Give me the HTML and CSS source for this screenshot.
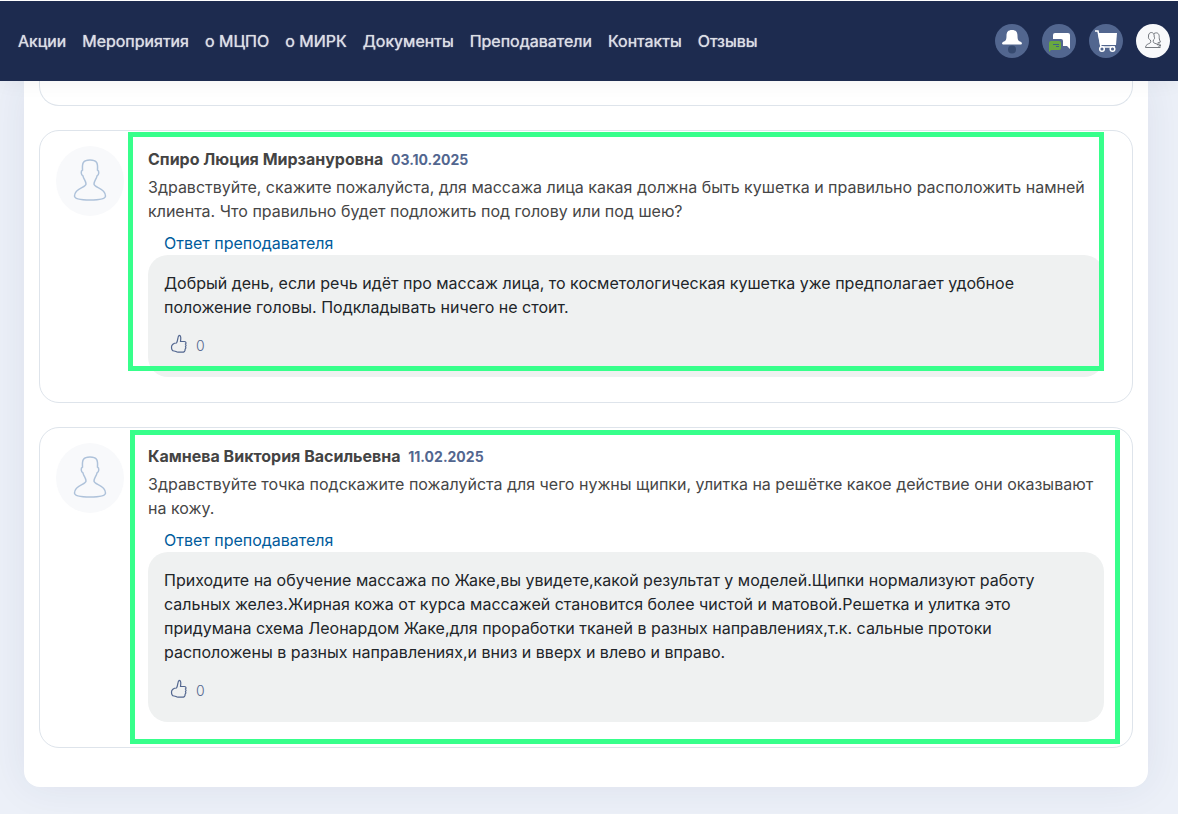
FILE: index.html
```html
<!DOCTYPE html>
<html lang="ru">
<head>
    <meta charset="UTF-8">
    <meta name="viewport" content="width=device-width, initial-scale=1.0">
    <title>Отзывы</title>
    <link rel="stylesheet" href="styles.css">
</head>
<body>
    <svg class="sprite" aria-hidden="true">
        <symbol id="icon-user" viewBox="0 0 34 42">
            <path d="M9.500 11C9 4 10 1 17 1s8 3 7.500 10c2 1 1.500 5-.5 6-.5 3-3 5-3 8 0 4 11.500 3.500 11.500 12 0 3-6 4-15.500 4S1.500 40 1.500 37c0-8.500 11.500-8 11.500-12 0-3-2.500-5-3-8-2-1-2.500-5-.5-6z"/>
        </symbol>
        <symbol id="icon-like" viewBox="0 0 18 20">
            <path d="M6.500 9C8 7 7.500 2 9.200 1.300c1.800 0 1.800 3 1.300 6.200h4c2 0 1.600 2 1 2.500 1 1 .5 2 0 2.600.7 1 .3 2-.4 2.600.3 2-1 3-3 3H8c-2 0-2-1.200-4-1.200-2 0-2.500-2-2.500-4S3.500 9 6.500 9z"/>
        </symbol>
    </svg>

    <header class="header">
        <nav class="nav">
            <a href="#">Акции</a>
            <a href="#">Мероприятия</a>
            <a href="#">о МЦПО</a>
            <a href="#">о МИРК</a>
            <a href="#">Документы</a>
            <a href="#">Преподаватели</a>
            <a href="#">Контакты</a>
            <a href="#">Отзывы</a>
        </nav>
        <div class="actions">
            <button class="action-btn" type="button" aria-label="Уведомления">
                <svg viewBox="0 0 34 34">
                    <circle cx="17" cy="25.500" r="4" fill="#364a70"/>
                    <path d="M17 6c4 0 5.500 2 5.500 6 0 4 1 5 3.500 6 1 .5 1.500 2.500 0 2.500H8c-1.500 0-1-2-0-2.500C10.500 17 11.500 16 11.500 12c0-4 1.500-6 5.500-6z" fill="#fff"/>
                </svg>
            </button>
            <button class="action-btn" type="button" aria-label="Сообщения">
                <svg viewBox="0 0 34 34">
                    <path d="M13 9h13q2 0 2 2v14l-3-3h-4v-5q0-2-2-2h-8v-4q0-2 2-2z" fill="#fff"/>
                    <path d="M9 17h8q2 0 2 2v5q0 2-2 2h-8l-2 2v-9q0-2 2-2z" fill="#69a83f"/>
                    <path d="M11 20.500h6M14 22.500h3" stroke="#3e6285" fill="none"/>
                </svg>
            </button>
            <button class="action-btn" type="button" aria-label="Корзина">
                <svg viewBox="0 0 34 34" fill="none" stroke="#fff">
                    <path d="M9 9h19l-1 12H11z" fill="#fff" stroke="none"/>
                    <path d="M6 7h3l3 16h14" stroke-width="1.500"/>
                    <circle cx="13" cy="25" r="2.300" stroke-width="1.500" fill="#52668f"/>
                    <circle cx="23.500" cy="25" r="2.300" stroke-width="1.500" fill="#52668f"/>
                </svg>
            </button>
            <button class="action-btn action-btn-light" type="button" aria-label="Профиль">
                <svg viewBox="0 0 34 34" fill="none" stroke="#666b72" stroke-width=".9">
                    <path d="M12.500 13c-.8-6 6.500-6 5.700 0 1 1 0 2.500-.8 3-.4 2-.2 2.500.8 3 2 1 6 1.500 6 4.500H9.500c0-3 3-3.500 4.500-4.500 1-.5 1-1.500.300-3-1-.5-2.300-2-1.800-3z"/>
                    <path d="M18 9.500c4-2 5.500 1 5.200 4 0 2 .8 3.500 1.300 4.500l-3 1M21 21q2-2 3.500-.5M22.500 22.500q1-1.500 2.500-1"/>
                </svg>
            </button>
        </div>
    </header>

    <main class="panel">
        <div class="card card-prev"></div>

        <article class="card">
            <div class="avatar"><svg><use href="#icon-user"/></svg></div>
            <div class="review">
                <h2 class="review-title">Спиро Люция Мирзануровна <time class="date" datetime="2025-10-03">03.10.2025</time></h2>
                <p class="question">Здравствуйте, скажите пожалуйста, для массажа лица какая должна быть кушетка и правильно расположить намней клиента. Что правильно будет подложить под голову или под шею?</p>
                <a class="answer-link" href="#answer-1">Ответ преподавателя</a>
                <div class="answer" id="answer-1">
                    <p>Добрый день, если речь идёт про массаж лица, то косметологическая кушетка уже предполагает удобное положение головы. Подкладывать ничего не стоит.</p>
                    <button class="like" type="button" aria-label="Нравится"><svg><use href="#icon-like"/></svg><span>0</span></button>
                </div>
            </div>
            <div class="mark mark-first"></div>
        </article>

        <article class="card">
            <div class="avatar"><svg><use href="#icon-user"/></svg></div>
            <div class="review">
                <h2 class="review-title">Камнева Виктория Васильевна <time class="date" datetime="2025-02-11">11.02.2025</time></h2>
                <p class="question">Здравствуйте точка подскажите пожалуйста для чего нужны щипки, улитка на решётке какое действие они оказывают на кожу.</p>
                <a class="answer-link" href="#answer-2">Ответ преподавателя</a>
                <div class="answer" id="answer-2">
                    <p>Приходите на обучение массажа по Жаке,вы увидете,какой результат у моделей.Щипки нормализуют работу сальных желез.Жирная кожа от курса массажей становится более чистой и матовой.Решетка и улитка это придумана схема Леонардом Жаке,для проработки тканей в разных направлениях,т.к. сальные протоки расположены в разных направлениях,и вниз и вверх и влево и вправо.</p>
                    <button class="like" type="button" aria-label="Нравится"><svg><use href="#icon-like"/></svg><span>0</span></button>
                </div>
            </div>
            <div class="mark mark-second"></div>
        </article>
    </main>
</body>
</html>
```
FILE: styles.css
```css
* {
    margin: 0;
    padding: 0;
    box-sizing: border-box;
}

body {
    font-family: Inter, "Open Sans", sans-serif;
    font-size: 16px;
    line-height: 24px;
    color: #212529;
    background: #ecf0f8;
    min-height: 100vh;
}

button {
    font: inherit;
    border: none;
    cursor: pointer;
}

.sprite {
    display: none;
}

.header {
    position: relative;
    z-index: 2;
    display: flex;
    align-items: center;
    justify-content: space-between;
    height: 81px;
    padding: 0 8px 0 18px;
    background: #1d2b4f;
    border-top: 1px solid #fff;
    box-shadow: 0 0 20px rgba(0, 0, 0, 0.06);
}

.nav {
    display: flex;
    gap: 16px;
}

.nav a {
    color: #dcdfe5;
    font-weight: 400;
    text-decoration: none;
    text-shadow: 0 0 1px #dcdfe5;
    white-space: nowrap;
}

.actions {
    display: flex;
    gap: 13px;
}

.action-btn {
    width: 34px;
    height: 34px;
    border-radius: 50%;
    background: #52668f;
}

.action-btn svg {
    display: block;
    width: 34px;
    height: 34px;
}

.action-btn-light {
    background: #f8f9fb;
}

.panel {
    margin: 0 30px 0 24px;
    padding: 0 15px 39px;
    background: #fff;
    border-radius: 0 0 16px 16px;
    box-shadow: 0 0 40px rgba(40, 50, 100, 0.08);
}

.card {
    position: relative;
    display: flex;
    gap: 24px;
    padding: 15px 28px 25px 16px;
    margin-bottom: 24px;
    border: 1px solid #dee4eb;
    border-radius: 20px;
}

.card:last-child {
    margin-bottom: 0;
}

.card-prev {
    border-top: none;
    border-radius: 0 0 20px 20px;
    padding-top: 0;
    padding-bottom: 24px;
}

.avatar {
    display: flex;
    align-items: center;
    justify-content: center;
    flex: none;
    width: 68px;
    height: 70px;
    border-radius: 50%;
    background: #f8f9fb;
}

.avatar svg {
    width: 34px;
    height: 42px;
    margin-bottom: 2px;
    fill: none;
    stroke: #aec2da;
    stroke-width: 1.5;
}

.review {
    flex: 1;
    min-width: 0;
    padding-top: 1px;
}

.review-title {
    margin-bottom: 4px;
    font-size: 16px;
    font-weight: 700;
    color: #444;
}

.date {
    margin-left: 4px;
    font-size: 14px;
    line-height: 20px;
    color: #52668f;
}

.question {
    margin-bottom: 8px;
    color: #464646;
}

.answer-link {
    display: block;
    padding-left: 16px;
    color: #005b9c;
    text-decoration: none;
}

.answer {
    padding: 16px;
    background: #eff1f1;
    border-radius: 20px;
}

.like {
    display: flex;
    align-items: center;
    gap: 8px;
    height: 34px;
    margin-top: 8px;
    padding: 0 6px;
    background: none;
    color: #52668f;
    font-size: 14px;
    font-weight: 300;
}

.like span {
    padding-top: 4px;
}

.like svg {
    width: 18px;
    height: 20px;
    fill: none;
    stroke: #52668f;
    stroke-width: 1.2;
}

/* highlight frames over the reviews */
.mark {
    position: absolute;
    border: 5px solid #37ff8b;
    pointer-events: none;
}

.mark-first {
    inset: 1px 28px 31px 88px;
}

.mark-second {
    inset: 2px 12px 3px 90px;
}

@media (max-width: 900px) {
    .header {
        height: auto;
        padding: 16px;
    }

    .nav {
        flex-wrap: wrap;
    }
}
```
